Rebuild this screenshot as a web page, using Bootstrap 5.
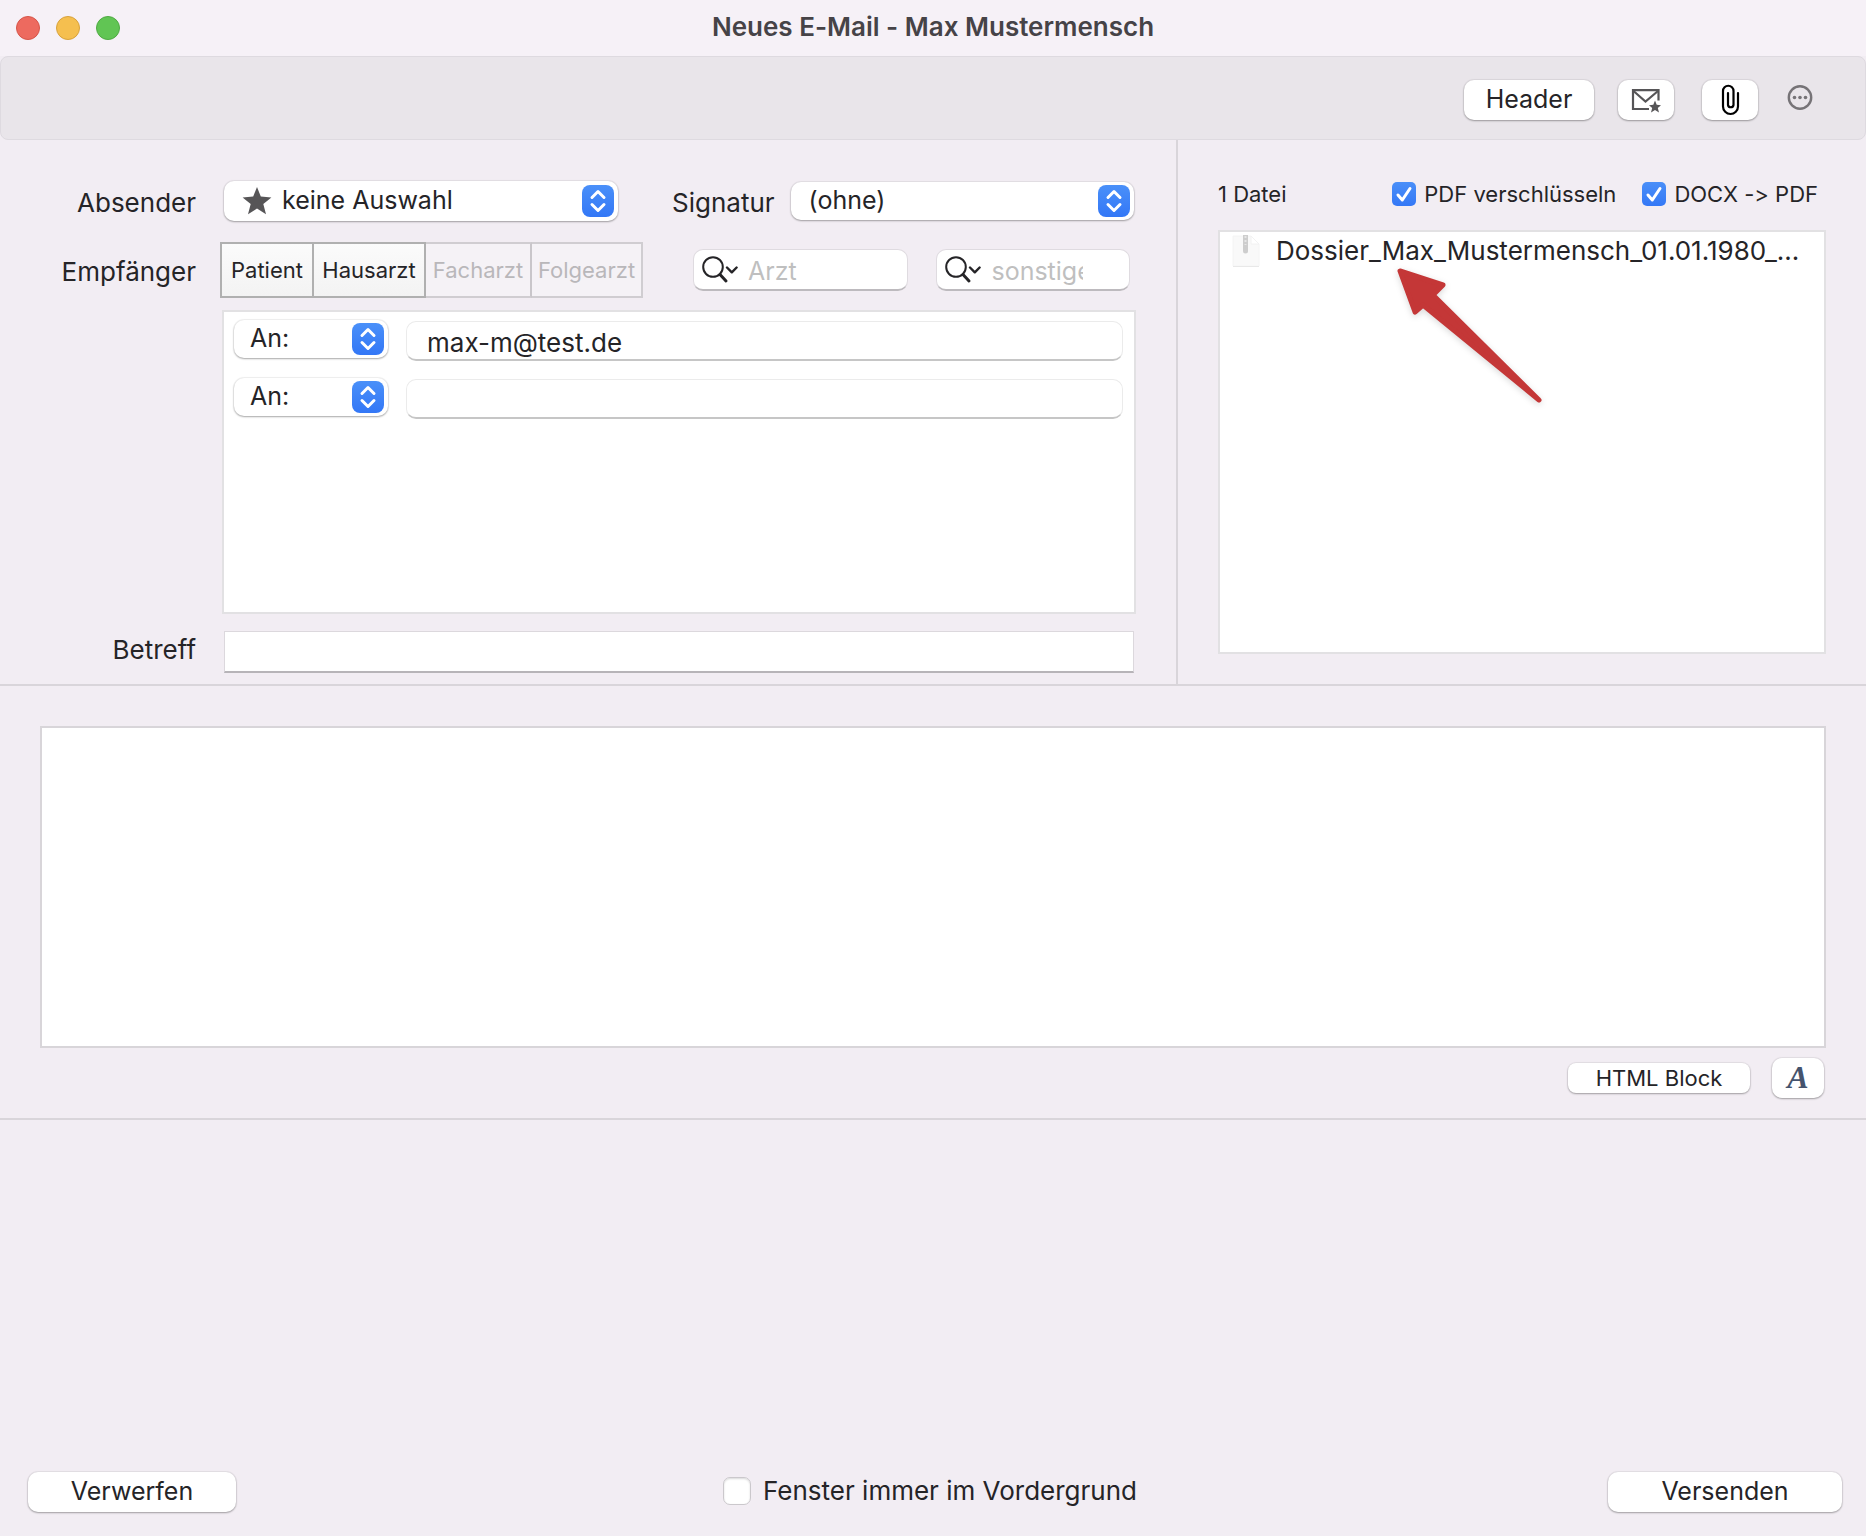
<!DOCTYPE html>
<html lang="de">
<head>
<meta charset="utf-8">
<meta name="viewport" content="width=device-width, initial-scale=1">
<title>Neues E-Mail - Max Mustermensch</title>
<link href="https://cdn.jsdelivr.net/npm/bootstrap@5.3.0/dist/css/bootstrap.min.css" rel="stylesheet">
<style>
body{font-family:Inter,"Liberation Sans",sans-serif;font-size:26px;line-height:32px;color:#252427;background:#f2edf3;font-feature-settings:"calt" 0}
.title-bar{height:56px;background:#f6f1f7;padding-bottom:2px}
.title-bar h1{font-size:26px;line-height:32px;font-weight:600;color:#464347}
.lights{top:16px}
.light{width:24px;height:24px;border-radius:50%;border:1px solid;padding:0}
.light-red{background:#ed6a5f;border-color:#d65549}
.light-yellow{background:#f5bf4f;border-color:#d8a23c}
.light-green{background:#61c554;border-color:#4faa43}
.tool-bar{height:84px;background:#e9e5ea;border:1px solid #dedae0;border-radius:8px;padding:4px 51px 0 24px}
.mac-btn{height:40px;padding:0 0 2px;border:0;border-radius:10px;background:#fff;color:#252427;font-size:25px;line-height:38px;box-shadow:0 0 1px 1px rgba(0,0,0,.06),0 1px 2px rgba(0,0,0,.3)}
.mac-btn:hover{background:#f8f8f8}
.w-head{width:130px}.w-icon{width:56px}.w-discard{width:208px}.w-send{width:234px}
.gap-clip{margin-left:28px}
.mac-btn.w-icon{padding:0}
.mac-btn.block-btn{width:182px;height:30px;padding:0;font-size:22px;line-height:30px;border-radius:8px}
.mac-btn.font-btn{width:52px;margin-left:22px;font:italic bold 32px/36px "Liberation Serif",serif;color:#45536d}
.compose-pane{padding:41px 42px 11px 40px}
.compose-pane > div{column-gap:28px}
.side-pane{width:690px;border-left:2px solid #d9d5da;padding:40px 40px 30px 40px}
.cap{width:156px;text-align:right;flex:none}
.cap-low{padding-top:4px}
.sender-col{flex:394 1 0}
.sign-col{flex:488 1 0}
.sign-col label{margin-left:26px}
.row-rcpt{margin-top:21px}.row-list{margin-top:12px}.row-subj{margin-top:17px}
.pop{position:relative;height:40px}
.pop select{display:block;width:100%;height:100%;appearance:none;border:0;border-radius:10px;background:#fff;color:#252427;font-size:25px;padding:0 48px 2px 18px;box-shadow:0 0 1px 1px rgba(0,0,0,.06),0 1px 2px rgba(0,0,0,.3)}
.pop .stepper{position:absolute;right:4px;top:4px;width:32px;height:32px;pointer-events:none}
.pop .star{position:absolute;left:18px;top:6px;width:30px;height:28px;pointer-events:none}
.pop.with-star select{padding-left:58px}
.pop.short{height:38px}
.pop.short .stepper{top:3px}
.w-to{width:154px}
.w-to select{padding-left:16px}
.seg{height:56px;border:2px solid #d0cdd1;margin-left:-4px}
.seg button{border:0;border-right:2px solid #c9c6ca;background:#f5f2f6;color:#b9b7ba;font-size:22px;line-height:28px;padding:0;margin:-2px 0;border-top:2px solid #d0cdd1;border-bottom:2px solid #d0cdd1}
.seg button:last-child{border-right:0}
.seg .on{background:linear-gradient(#fbfbfb,#f3f3f3);color:#252427;border-color:#b0b0b0}
.seg .on:first-child{margin-left:-2px;border-left:2px solid #b0b0b0}
.seg-a{width:94px}.seg-b{width:112px}.seg-c{width:106px}.seg-d{width:109px}
.find{position:relative}
.find-a{flex:216 1 0;margin-left:50px}
.find-b{flex:194 1 0;margin-left:28px}
.find svg{position:absolute;left:9px;top:7px;width:36px;height:28px;pointer-events:none}
.find input,.soft-in{display:block;width:100%;height:42px;border:1px solid #dfdbe0;border-bottom:2px solid #bdbabe;border-radius:10px;background:#fff;color:#252427}
.find input{padding:2px 46px 0 54px;font-size:25px}
.find input::-webkit-search-cancel-button{display:none}
.find input::placeholder{color:#bfbfbf;opacity:1}
.to-list{min-height:304px;border:2px solid #e2e1e3;background:#fff;padding:8px 11px 8px 10px;margin:0 -2px;row-gap:17px}
.to-list > div{column-gap:18px}
.soft-wrap{padding-top:1px}
.soft-in{height:40px;border-color:#ebebeb #ebebeb #c6c6c6;padding:3px 20px 0}
.subject{height:42px;border:1px solid #dcd8dd;border-bottom:2px solid #b7b4b8;background:#fff;min-width:0}
.small-txt{font-size:22px;line-height:28px;margin-bottom:22px}
.tick-next{margin-left:26px}
.tick{appearance:none;flex:none;width:24px;height:24px;margin:0;border-radius:5px;background:linear-gradient(#4a8ff8,#3478f6)}
.tick-wrap{position:relative;display:flex}
.tick-wrap svg{position:absolute;left:0;top:0;pointer-events:none;display:none}
.tick:checked + svg{display:block}
.tick:not(:checked){background:#fff;border:1px solid #cbc8cc;box-shadow:inset 0 1px 2px rgba(0,0,0,.15)}
.tick.big{width:28px;height:28px;border-radius:7px}
.files{min-height:424px;border:2px solid #e2e1e3;background:#fff;position:relative;margin:0}
.files li{padding:2px 10px 0 12px;column-gap:16px}
.pointer{position:absolute;left:172px;top:32px;width:160px;height:146px;pointer-events:none}
.body-area{border-top:2px solid #d9d5da;border-bottom:2px solid #d9d5da;padding:40px 40px 20px}
.body-area textarea{display:block;width:100%;height:322px;border:2px solid #d8d5d9;background:#fff;resize:none}
.body-tools{margin-top:10px;padding-right:2px}
.foot{padding:0 24px 24px 28px}
.foot-mid{padding:0 0 2px 16px;column-gap:12px}
</style>
</head>
<body>
<svg width="0" height="0" class="position-absolute" aria-hidden="true">
  <defs>
    <linearGradient id="blue" x1="0" y1="0" x2="0" y2="1"><stop offset="0" stop-color="#4a90f9"/><stop offset="1" stop-color="#3377f6"/></linearGradient>
    <symbol id="step" viewBox="0 0 32 32"><rect width="32" height="32" rx="8" fill="url(#blue)"/><path d="M10 12.500 16 6.500 22 12.500M10 19.500 16 25.500 22 19.500" fill="none" stroke="#fff" stroke-width="3" stroke-linecap="round" stroke-linejoin="round"/></symbol>
    <symbol id="lens" viewBox="0 0 36 28"><circle cx="11" cy="11" r="9.800" fill="none" stroke="#252427" stroke-width="2"/><path d="M18 18.500 24 25" stroke="#252427" stroke-width="3" stroke-linecap="round"/><path d="M25 11.500 29.800 16.300 34.600 11.500" fill="none" stroke="#252427" stroke-width="2.400" stroke-linecap="round" stroke-linejoin="round"/></symbol>
    <symbol id="check" viewBox="0 0 24 24"><path d="M6 13 10.300 18 18 6.500" fill="none" stroke="#fff" stroke-width="3" stroke-linecap="round" stroke-linejoin="round"/></symbol>
    <symbol id="star5" viewBox="0 0 30 28"><path d="M15 0 18.800 9.600 29.400 10.400 21.300 17.100 24 27.200 15 21.600 6 27.200 8.700 17.100 .6 10.400 11.200 9.600Z" fill="#565557"/></symbol>
  </defs>
</svg>
<div class="min-vh-100 d-flex flex-column">
  <header class="title-bar position-relative d-flex align-items-center justify-content-center">
    <div class="lights position-absolute start-0 ms-3 d-flex gap-3">
      <button class="light light-red" aria-label="Schließen"></button>
      <button class="light light-yellow" aria-label="Minimieren"></button>
      <button class="light light-green" aria-label="Vergrößern"></button>
    </div>
    <h1 class="m-0">Neues E-Mail - Max Mustermensch</h1>
  </header>
  <div class="tool-bar d-flex align-items-center justify-content-end">
    <button class="mac-btn w-head me-4">Header</button>
    <button class="mac-btn w-icon d-flex align-items-center justify-content-center" aria-label="E-Mail-Vorlage">
      <svg width="30" height="26" viewBox="0 0 30 26"><path d="M18 22H2V3.200H27.500V13.500" fill="none" stroke="#565557" stroke-width="2.200"/><path d="M2.500 4 14.500 14.500 27 4" fill="none" stroke="#565557" stroke-width="2.200"/><path d="M24 13.500 25.700 17.800 30 18.200 26.800 21 28 25.600 24 23.100 20 25.600 21.200 21 18 18.200 22.300 17.800Z" fill="#565557"/></svg>
    </button>
    <button class="mac-btn w-icon gap-clip d-flex align-items-center justify-content-center" aria-label="Anhang">
      <svg width="22" height="32" viewBox="0 0 22 32"><path d="M19 9V22.500A7.500 7.500 0 0 1 4 22.500V7A5.200 5.200 0 0 1 14.500 7V21A2.800 2.800 0 0 1 9 21V9" fill="none" stroke="#000" stroke-width="2.200" stroke-linecap="round"/></svg>
    </button>
    <button class="btn p-0 border-0 d-flex ms-4" aria-label="Mehr">
      <svg class="ms-1 mb-1" width="28" height="28" viewBox="0 0 28 28"><circle cx="14" cy="13.500" r="11.200" fill="none" stroke="#767377" stroke-width="2.400"/><circle cx="8.500" cy="13.500" r="1.800" fill="#767377"/><circle cx="14" cy="13.500" r="1.800" fill="#767377"/><circle cx="19.500" cy="13.500" r="1.800" fill="#767377"/></svg>
    </button>
  </div>

  <div class="d-flex">
    <section class="compose-pane flex-grow-1">
      <div class="d-flex align-items-center">
        <label class="cap cap-low" for="from">Absender</label>
        <div class="pop with-star sender-col">
          <select id="from"><option>keine Auswahl</option></select>
          <svg class="star"><use href="#star5"/></svg><svg class="stepper"><use href="#step"/></svg>
        </div>
        <div class="sign-col d-flex align-items-center">
          <label class="cap-low me-3" for="sig">Signatur</label>
          <div class="pop short flex-grow-1">
            <select id="sig"><option>(ohne)</option></select>
            <svg class="stepper"><use href="#step"/></svg>
          </div>
        </div>
      </div>
      <div class="row-rcpt d-flex align-items-center">
        <span class="cap cap-low">Empfänger</span>
        <div class="d-flex align-items-center flex-grow-1">
          <div class="seg d-flex" role="group" aria-label="Empfänger">
            <button class="seg-a on">Patient</button><button class="seg-b on">Hausarzt</button><button class="seg-c" disabled>Facharzt</button><button class="seg-d" disabled>Folgearzt</button>
          </div>
          <div class="find find-a"><svg><use href="#lens"/></svg><input type="search" aria-label="Arzt suchen" placeholder="Arzt"></div>
          <div class="find find-b me-1"><svg><use href="#lens"/></svg><input type="search" aria-label="Sonstige suchen" placeholder="sonstige"></div>
        </div>
      </div>
      <div class="row-list d-flex">
        <span class="cap"></span>
        <div class="to-list flex-grow-1 d-flex flex-column">
          <div class="d-flex">
            <div class="pop short w-to"><select aria-label="Empfängerart 1"><option>An:</option></select><svg class="stepper"><use href="#step"/></svg></div>
            <div class="soft-wrap flex-grow-1"><input class="soft-in" type="email" aria-label="Adresse 1" value="max-m@test.de"></div>
          </div>
          <div class="d-flex">
            <div class="pop short w-to"><select aria-label="Empfängerart 2"><option>An:</option></select><svg class="stepper"><use href="#step"/></svg></div>
            <div class="soft-wrap flex-grow-1"><input class="soft-in" type="email" aria-label="Adresse 2"></div>
          </div>
        </div>
      </div>
      <div class="row-subj d-flex align-items-center">
        <label class="cap pb-1" for="subj">Betreff</label>
        <input class="subject flex-grow-1" id="subj" type="text">
      </div>
    </section>

    <aside class="side-pane flex-shrink-0">
      <div class="small-txt d-flex align-items-center pe-2">
        <span class="me-auto">1 Datei</span>
        <span class="tick-wrap"><input class="tick" type="checkbox" id="pdf" checked><svg width="24" height="24"><use href="#check"/></svg></span>
        <label class="ms-2" for="pdf">PDF verschlüsseln</label>
        <span class="tick-wrap tick-next"><input class="tick" type="checkbox" id="docx" checked><svg width="24" height="24"><use href="#check"/></svg></span>
        <label class="ms-2" for="docx">DOCX -&gt; PDF</label>
      </div>
      <ul class="files list-unstyled">
        <li class="d-flex align-items-center">
          <svg class="flex-shrink-0" width="28" height="34" viewBox="0 0 28 34"><path d="M1 2H19L27 10V32H1Z" fill="#f9f9f9" stroke="#f4f4f4"/><path d="M19 2V10H27Z" fill="#fff" stroke="#f2f2f2"/><path d="M1 32.500H27" stroke="#e8e8e8"/><path d="M11 1H16V17A2.500 2.500 0 0 1 11 17Z" fill="#cdcdcd"/><path d="M13.500 2V11" stroke="#e6e6e6" stroke-width="2" stroke-dasharray="2 2"/></svg>
          <span class="text-nowrap">Dossier_Max_Mustermensch_01.01.1980_...</span>
        </li>
        <li class="p-0"><svg class="pointer" viewBox="0 0 160 146" aria-hidden="true"><path d="M8 7 51 21 41 31 147 136 31 41 23 48Z" fill="#c43737" stroke="#c43737" stroke-width="5" stroke-linejoin="round" style="filter:drop-shadow(0 2px 3px rgba(0,0,0,.15))"/></svg></li>
      </ul>
    </aside>
  </div>

  <section class="body-area">
    <textarea aria-label="Nachricht"></textarea>
    <div class="body-tools d-flex justify-content-end align-items-center">
      <button class="mac-btn block-btn">HTML Block</button>
      <button class="mac-btn font-btn">A</button>
    </div>
  </section>

  <footer class="foot mt-auto d-flex justify-content-between align-items-center">
    <button class="mac-btn w-discard">Verwerfen</button>
    <div class="foot-mid d-flex align-items-center">
      <input class="tick big" type="checkbox" id="top">
      <label for="top">Fenster immer im Vordergrund</label>
    </div>
    <button class="mac-btn w-send">Versenden</button>
  </footer>
</div>
<script src="https://cdn.jsdelivr.net/npm/bootstrap@5.3.0/dist/js/bootstrap.bundle.min.js"></script>
</body>
</html>
